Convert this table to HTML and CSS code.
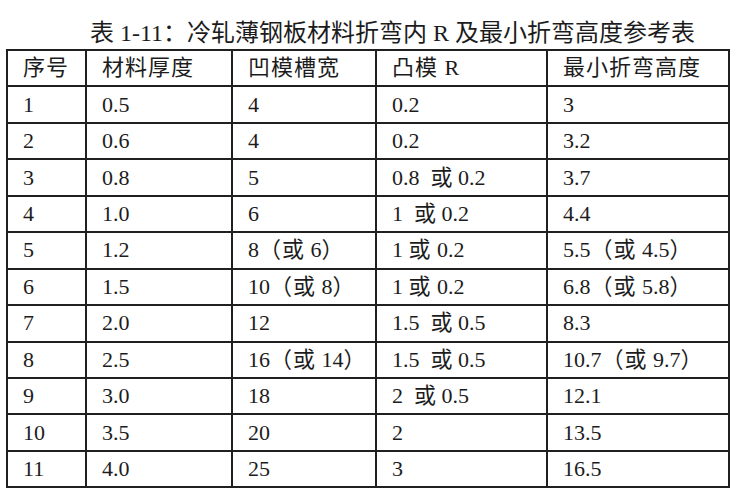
FILE: index.html
```html
<!DOCTYPE html>
<html lang="zh-CN">
<head>
<meta charset="utf-8">
<title>冷轧薄钢板材料折弯内R及最小折弯高度参考表</title>
<link rel="stylesheet" href="styles.css">
</head>
<body>
<div class="page">
  <div class="caption">表 1-11：冷轧薄钢板材料折弯内 R 及最小折弯高度参考表</div>
  <table class="ref">
    <colgroup>
      <col class="c1"><col class="c2"><col class="c3"><col class="c4"><col class="c5">
    </colgroup>
    <tr class="head"><td>序号</td><td>材料厚度</td><td>凹模槽宽</td><td>凸模 R</td><td>最小折弯高度</td></tr>
    <tr><td>1</td><td>0.5</td><td>4</td><td>0.2</td><td>3</td></tr>
    <tr><td>2</td><td>0.6</td><td>4</td><td>0.2</td><td>3.2</td></tr>
    <tr><td>3</td><td>0.8</td><td>5</td><td>0.8&nbsp; 或 0.2</td><td>3.7</td></tr>
    <tr><td>4</td><td>1.0</td><td>6</td><td>1&nbsp; 或 0.2</td><td>4.4</td></tr>
    <tr><td>5</td><td>1.2</td><td>8<span class="zh">（或</span> 6<span class="zh">）</span></td><td>1 <span class="zh">或</span> 0.2</td><td>5.5<span class="zh">（或</span> 4.5<span class="zh">）</span></td></tr>
    <tr><td>6</td><td>1.5</td><td>10<span class="zh">（或</span> 8<span class="zh">）</span></td><td>1 <span class="zh">或</span> 0.2</td><td>6.8<span class="zh">（或</span> 5.8<span class="zh">）</span></td></tr>
    <tr><td>7</td><td>2.0</td><td>12</td><td>1.5&nbsp; 或 0.5</td><td>8.3</td></tr>
    <tr><td>8</td><td>2.5</td><td>16<span class="zh">（或</span> 14<span class="zh">）</span></td><td>1.5&nbsp; 或 0.5</td><td>10.7<span class="zh">（或</span> 9.7<span class="zh">）</span></td></tr>
    <tr><td>9</td><td>3.0</td><td>18</td><td>2&nbsp; 或 0.5</td><td>12.1</td></tr>
    <tr><td>10</td><td>3.5</td><td>20</td><td>2</td><td>13.5</td></tr>
    <tr><td>11</td><td>4.0</td><td>25</td><td>3</td><td>16.5</td></tr>
  </table>
</div>
</body>
</html>
```
FILE: styles.css
```css
html, body {
  margin: 0;
  padding: 0;
  background: #ffffff;
}

body {
  font-family: "Liberation Serif", "Noto Sans CJK SC", serif;
  color: #1c1c1c;
}

.page {
  width: 740px;
  height: 498px;
  padding-top: 18px;
  box-sizing: border-box;
}

.caption {
  font-size: 24px;
  line-height: 30px;
  height: 30px;
  padding-left: 90px;
  margin-bottom: 1px;
  white-space: nowrap;
}

.ref {
  margin-left: 6px;
  width: 724px;
  border-collapse: collapse;
  table-layout: fixed;
  border: 2px solid #202020;
}

.ref .c1 { width: 79px; }
.ref .c2 { width: 146px; }
.ref .c3 { width: 144px; }
.ref .c4 { width: 171px; }
.ref .c5 { width: 182px; }

.ref tr {
  height: 36.45px;
}

.ref td {
  border: 2px solid #202020;
  padding: 0 0 0 15px;
  font-size: 22px;
  line-height: 24px;
  white-space: nowrap;
  vertical-align: middle;
  overflow: hidden;
}

.ref .head td {
  letter-spacing: 1px;
}

.ref .zh {
  letter-spacing: 1px;
}
```
